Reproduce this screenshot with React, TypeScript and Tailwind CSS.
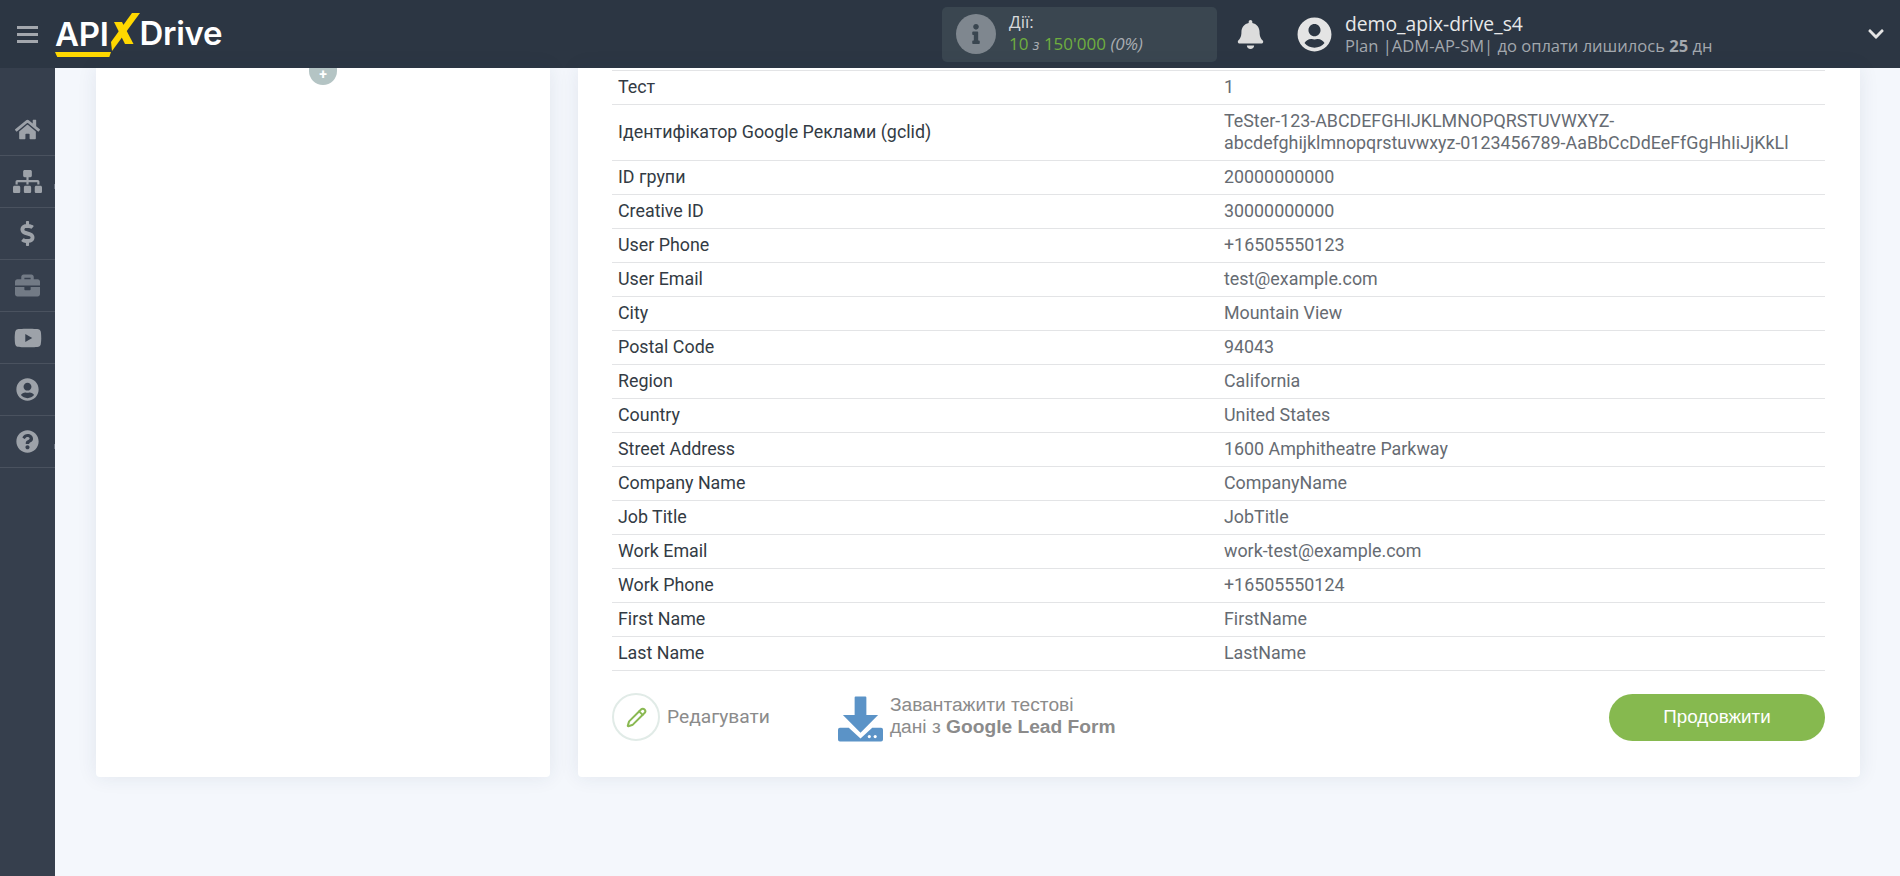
import React from "react";
import { FaHome, FaSitemap, FaDollarSign, FaBriefcase, FaYoutube, FaUserCircle, FaQuestionCircle, FaBell, FaInfo, FaChevronDown } from "react-icons/fa";
import { Pencil } from "lucide-react";

const rows: [string, React.ReactNode][] = [
  ["Тест", "1"],
  ["Ідентифікатор Google Реклами (gclid)", <>TeSter-123-ABCDEFGHIJKLMNOPQRSTUVWXYZ-<br />abcdefghijklmnopqrstuvwxyz-0123456789-AaBbCcDdEeFfGgHhIiJjKkLl</>],
  ["ID групи", "20000000000"],
  ["Creative ID", "30000000000"],
  ["User Phone", "+16505550123"],
  ["User Email", "test@example.com"],
  ["City", "Mountain View"],
  ["Postal Code", "94043"],
  ["Region", "California"],
  ["Country", "United States"],
  ["Street Address", "1600 Amphitheatre Parkway"],
  ["Company Name", "CompanyName"],
  ["Job Title", "JobTitle"],
  ["Work Email", "work-test@example.com"],
  ["Work Phone", "+16505550124"],
  ["First Name", "FirstName"],
  ["Last Name", "LastName"],
];

const side = [
  { I: FaHome, s: "text-[25px] text-[#9da2a9]", tick: false },
  { I: FaSitemap, s: "text-[29px] text-[#9da2a9]", tick: true },
  { I: FaDollarSign, s: "text-[25px] text-[#9da2a9]", tick: false },
  { I: FaBriefcase, s: "text-[25px] text-[#727a85]", tick: false },
  { I: FaYoutube, s: "text-[28px] text-[#9da2a9]", tick: false },
  { I: FaUserCircle, s: "text-[23px] text-[#9da2a9]", tick: false },
  { I: FaQuestionCircle, s: "text-[23px] text-[#9da2a9]", tick: true },
];

export default function App() {
  return (
    <div className="flex h-[876px] w-[1900px] flex-col overflow-hidden bg-[#f4f7fc] font-['Roboto',sans-serif]">
      <header className="flex h-[68px] shrink-0 items-center bg-[#2c3643] pl-[17px] font-['Open_Sans',sans-serif]">
        <div className="flex w-[21px] flex-col gap-[4px]">
          <span className="h-[3px] bg-[#a3a7ad]" />
          <span className="h-[3px] bg-[#a3a7ad]" />
          <span className="h-[3px] bg-[#a3a7ad]" />
        </div>
        <div className="relative ml-[17px] flex h-[40px] w-[170px] items-center font-['Inter',sans-serif] text-[33px] font-semibold tracking-[-0.3px] text-white">
          <span className="relative leading-[40px]">API<span className="absolute bottom-[-3px] left-0 h-[5px] w-[56px] bg-[#ffd800] [clip-path:polygon(0_0,100%_0,97%_100%,4%_100%)]" /></span>
          <svg width="31" height="38" viewBox="0 0 31 38" className="mb-[5px] shrink-0">
            <path d="M23 0H31L3 38L2 29Z" fill="#ffd800" />
            <path d="M5 9H13L24.5 31H16Z" fill="#ffd800" />
          </svg>
          <span>Drive</span>
        </div>
        <div className="ml-[717px] flex h-[55px] w-[275px] items-center rounded-[5px] bg-[#3a4650] pl-[14px]">
          <div className="flex h-[40px] w-[40px] items-center justify-center rounded-full bg-[#7f878f]">
            <FaInfo className="text-[20px] text-[#3a4650]" />
          </div>
          <div className="ml-[13px] mt-[-2px] flex flex-col text-[17px] leading-[22px]">
            <span className="text-[#d8dadc]">Дії:</span>
            <span className="text-[#6fae3f]">10 <i className="text-[15px] text-[#a9adb2]">з</i> 150'000 <i className="text-[#a9adb2]">(0%)</i></span>
          </div>
        </div>
        <FaBell className="ml-[19px] text-[29px] text-[#dcdcdc]" />
        <FaUserCircle className="ml-[32px] text-[35px] text-[#e4e4e4]" />
        <div className="ml-[13px] flex flex-col">
          <span className="text-[19.3px] leading-[24px] text-[#e8e9ea]">demo_apix-drive_s4</span>
          <span className="text-[16.55px] leading-[20px] text-[#a3a8ae]">Plan |ADM-AP-SM| до оплати лишилось <b>25</b> дн</span>
        </div>
        <FaChevronDown className="ml-auto mr-[15px] text-[18px] text-[#e4e4e4]" />
      </header>
      <div className="flex min-h-0 flex-1">
        <aside className="w-[55px] shrink-0 bg-[#363f4d]">
          <div className="h-[36px]" />
          {side.map(({ I, s, tick }, i) => (
            <div key={i} className="relative flex h-[52px] items-center justify-center border-b border-[#4a525f]">
              <I className={s} />
              {tick && <span className="absolute right-0 top-[28px] h-[5px] w-[1px] bg-[#6a7280]" />}
            </div>
          ))}
        </aside>
        <main className="flex flex-1 items-start gap-[28px] pl-[41px]">
          <section className="relative h-[709px] w-[454px] rounded-b-[4px] bg-white shadow-[0_0_20px_rgba(30,50,90,0.09)]">
            <div className="absolute left-[213px] top-0 flex h-[17px] w-[28px] items-start justify-center rounded-b-full bg-[#b4c4c4] text-[14px] font-bold leading-[12px] text-white">+</div>
          </section>
          <section className="h-[709px] w-[1282px] rounded-b-[4px] bg-white pl-[34px] pr-[35px] pt-[2px] shadow-[0_0_20px_rgba(30,50,90,0.09)]">
            <div className="border-t border-[#e3e4e6] text-[17.85px] leading-[22px]">
              {rows.map(([k, v], i) => (
                <div key={i} className={`flex items-center border-b border-[#e3e4e6] pb-[2px] ${i === 1 ? "h-[56px]" : "h-[34px]"}`}>
                  <div className="w-[612px] pl-[6px] text-[#333b44]">{k}</div>
                  <div className="text-[#666b72]">{v}</div>
                </div>
              ))}
            </div>
            <div className="mt-[22px] flex items-center">
              <div className="flex h-[48px] w-[48px] items-center justify-center rounded-full border-2 border-[#e1ebe7]">
                <Pencil size={21} strokeWidth={2.3} className="text-[#8ab952]" />
              </div>
              <span className="ml-[7px] text-[19.2px] text-[#8b8b8b]">Редагувати</span>
              <svg width="45" height="46" viewBox="0 0 46 46" className="mb-[-1px] ml-[68px] self-end">
                <path d="M17 1Q17 0 18 0H28Q29 0 29 1V19H41L23 37L5 19H17Z" fill="#5b93c7" />
                <path d="M2 32H11L23 43L35 32H44Q46 32 46 34V44Q46 46 44 46H2Q0 46 0 44V34Q0 32 2 32Z" fill="#5b93c7" />
                <circle cx="32" cy="41" r="1.6" fill="#fff" /><circle cx="38" cy="41" r="1.6" fill="#fff" />
              </svg>
              <div className="ml-[7px] mt-[-2px] font-['Liberation_Sans',sans-serif] text-[19.2px] leading-[22px] text-[#8b8b8b]">
                Завантажити тестові<br />дані з <b>Google Lead Form</b>
              </div>
              <button className="ml-auto h-[47px] w-[216px] rounded-full bg-[#86b94f] font-['Liberation_Sans',sans-serif] text-[18.8px] text-white">Продовжити</button>
            </div>
          </section>
        </main>
      </div>
    </div>
  );
}
